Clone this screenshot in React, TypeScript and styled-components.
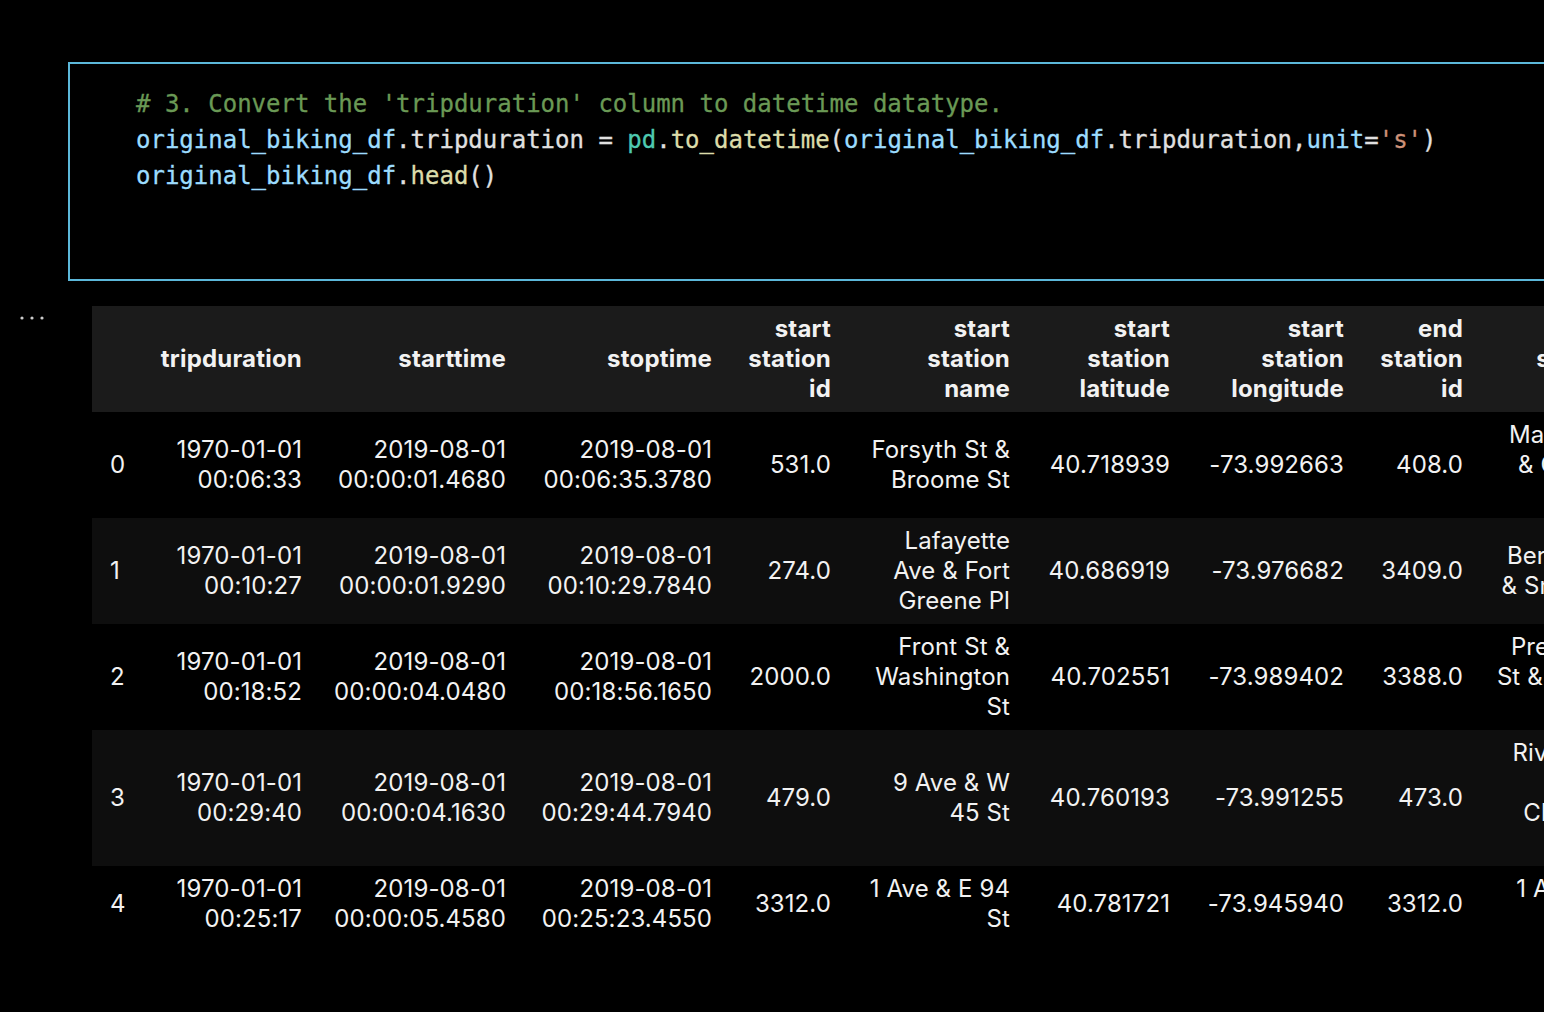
import React from 'react'
import styled, { createGlobalStyle } from 'styled-components'

const GlobalStyle = createGlobalStyle`
  html, body {
    margin: 0;
    padding: 0;
    background: #000;
  }
  body {
    overflow: hidden;
  }
`

const Page = styled.div`
  width: 100vw;
  height: 100vh;
  background: #000;
  overflow: hidden;
  padding-top: 62px;
  box-sizing: border-box;
`

const CodeCell = styled.div`
  margin-left: 68px;
  width: 1600px;
  height: 219px;
  box-sizing: border-box;
  border: 2px solid #5cb8da;
  padding: 22px 0 0 66px;
  font-family: 'DejaVu Sans Mono', monospace;
  font-size: 24px;
  line-height: 36px;
  color: #d8d8d8;
  white-space: pre;
  -webkit-text-stroke: 0.3px currentColor;
`

const CodeLine = styled.div`
  height: 36px;
`

const colors = {
  comment: '#6a9955',
  variable: '#9cdcfe',
  plain: '#e0e0e0',
  module: '#4ec9b0',
  func: '#dcdcaa',
  string: '#ce9178',
}

const Tok = styled.span<{ $kind: keyof typeof colors }>`
  color: ${({ $kind }) => colors[$kind]};
`

const OutputRow = styled.div`
  display: flex;
  align-items: flex-start;
  margin-top: 25px;
`

const Gutter = styled.div`
  width: 92px;
  flex: none;
  padding: 9px 0 0 19px;
  box-sizing: border-box;

  svg {
    display: block;
  }
`

const DataTable = styled.table`
  border-collapse: collapse;
  table-layout: fixed;
  flex: none;
  font-family: Inter, 'Noto Sans', sans-serif;
  font-size: 24px;
  letter-spacing: 0.1px;
  line-height: 30px;
  color: #f2f2f2;
`

const HeadRow = styled.tr`
  background: #1b1b1b;
`

const BodyRow = styled.tr<{ $odd: boolean }>`
  background: ${({ $odd }) => ($odd ? '#0e0e0e' : '#000')};
`

const HeadCell = styled.th`
  padding: 8px 18px 8px 14px;
  text-align: right;
  vertical-align: middle;
  font-weight: 700;
  letter-spacing: 0.2px;
  white-space: pre;
`

const IndexCell = styled.td`
  padding: 8px 18px;
  text-align: left;
  vertical-align: middle;
`

const Cell = styled.td`
  padding: 8px 18px 8px 14px;
  text-align: right;
  vertical-align: middle;
  white-space: pre;
`

const widths = [48, 180, 204, 206, 119, 179, 160, 174, 119, 156]

const headers = [
  '',
  'tripduration',
  'starttime',
  'stoptime',
  'start\nstation\nid',
  'start\nstation\nname',
  'start\nstation\nlatitude',
  'start\nstation\nlongitude',
  'end\nstation\nid',
  'end\nstation\nname',
]

const rows = [
  ['0', '1970-01-01\n00:06:33', '2019-08-01\n00:00:01.4680', '2019-08-01\n00:06:35.3780', '531.0', 'Forsyth St &\nBroome St', '40.718939', '-73.992663', '408.0', 'Market St\n& Cherry\nSt'],
  ['1', '1970-01-01\n00:10:27', '2019-08-01\n00:00:01.9290', '2019-08-01\n00:10:29.7840', '274.0', 'Lafayette\nAve & Fort\nGreene Pl', '40.686919', '-73.976682', '3409.0', 'Bergen St\n& Smith St'],
  ['2', '1970-01-01\n00:18:52', '2019-08-01\n00:00:04.0480', '2019-08-01\n00:18:56.1650', '2000.0', 'Front St &\nWashington\nSt', '40.702551', '-73.989402', '3388.0', 'President\nSt & Henry\nSt'],
  ['3', '1970-01-01\n00:29:40', '2019-08-01\n00:00:04.1630', '2019-08-01\n00:29:44.7940', '479.0', '9 Ave & W\n45 St', '40.760193', '-73.991255', '473.0', 'Rivington\nSt &\nChrystie\nSt'],
  ['4', '1970-01-01\n00:25:17', '2019-08-01\n00:00:05.4580', '2019-08-01\n00:25:23.4550', '3312.0', '1 Ave & E 94\nSt', '40.781721', '-73.945940', '3312.0', '1 Ave & E\n94 St'],
]

function Ellipsis() {
  return (
    <svg width="28" height="6" viewBox="0 0 28 6">
      <circle cx="3" cy="3" r="1.6" fill="#cccccc" />
      <circle cx="13" cy="3" r="1.6" fill="#cccccc" />
      <circle cx="23" cy="3" r="1.6" fill="#cccccc" />
    </svg>
  )
}

export default function App() {
  const tableWidth = widths.reduce((a, b) => a + b, 0)
  return (
    <Page>
      <GlobalStyle />
      <CodeCell>
        <CodeLine>
          <Tok $kind="comment"># 3. Convert the 'tripduration' column to datetime datatype.</Tok>
        </CodeLine>
        <CodeLine>
          <Tok $kind="variable">original_biking_df</Tok>
          <Tok $kind="plain">.tripduration = </Tok>
          <Tok $kind="module">pd</Tok>
          <Tok $kind="plain">.</Tok>
          <Tok $kind="func">to_datetime</Tok>
          <Tok $kind="plain">(</Tok>
          <Tok $kind="variable">original_biking_df</Tok>
          <Tok $kind="plain">.tripduration,</Tok>
          <Tok $kind="variable">unit</Tok>
          <Tok $kind="plain">=</Tok>
          <Tok $kind="string">'s'</Tok>
          <Tok $kind="plain">)</Tok>
        </CodeLine>
        <CodeLine>
          <Tok $kind="variable">original_biking_df</Tok>
          <Tok $kind="plain">.</Tok>
          <Tok $kind="func">head</Tok>
          <Tok $kind="plain">()</Tok>
        </CodeLine>
      </CodeCell>
      <OutputRow>
        <Gutter>
          <Ellipsis />
        </Gutter>
        <DataTable style={{ width: tableWidth }}>
          <colgroup>
            {widths.map((w, i) => (
              <col key={i} style={{ width: w }} />
            ))}
          </colgroup>
          <thead>
            <HeadRow>
              {headers.map((h, i) => (
                <HeadCell key={i}>{h}</HeadCell>
              ))}
            </HeadRow>
          </thead>
          <tbody>
            {rows.map((r, ri) => (
              <BodyRow key={ri} $odd={ri % 2 === 1}>
                <IndexCell>{r[0]}</IndexCell>
                {r.slice(1).map((c, ci) => (
                  <Cell key={ci}>{c}</Cell>
                ))}
              </BodyRow>
            ))}
          </tbody>
        </DataTable>
      </OutputRow>
    </Page>
  )
}
